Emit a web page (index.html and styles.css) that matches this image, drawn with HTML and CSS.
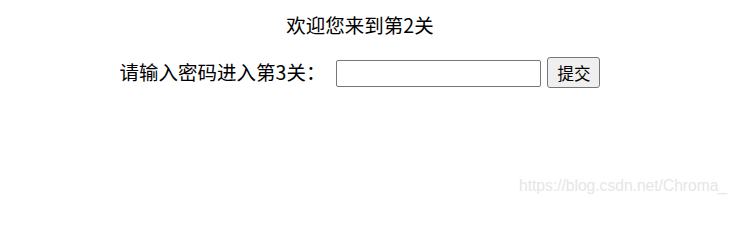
FILE: index.html
```html
<!DOCTYPE html>
<html lang="zh-CN">
<head>
<meta charset="utf-8">
<title>第2关</title>
<link rel="stylesheet" href="styles.css">
</head>
<body>
<div class="page">
  <div class="title">欢迎您来到第2关</div>
  <form class="row" onsubmit="return false;">
    <label class="label" for="pw">请输入密码进入第3关：</label>
    <input class="field" id="pw" type="text">
    <button class="btn" type="submit">提交</button>
  </form>
</div>
<div class="watermark">https://blog.csdn.net/Chroma_</div>
</body>
</html>
```
FILE: styles.css
```css
html, body {
  margin: 0;
  padding: 0;
  background: #ffffff;
}
body {
  font-family: "Noto Sans CJK SC", "Noto Sans", sans-serif;
  color: #000;
  width: 738px;
  height: 204px;
  position: relative;
  overflow: hidden;
}
.page {
  width: 720px;
  padding-top: 13px;
  text-align: center;
}
.title {
  font-size: 19.5px;
  line-height: 24px;
  height: 24px;
}
.row {
  margin: 20px 0 0 0;
  display: flex;
  justify-content: center;
  align-items: center;
  height: 31px;
}
.label {
  font-size: 19.5px;
  line-height: 24px;
  margin-right: 11px;
  margin-top: -2px;
}
.field {
  box-sizing: border-box;
  width: 205px;
  height: 27px;
  margin: 2px 6px 0 0;
  border: 1px solid #767676;
  border-radius: 2px;
  padding: 1px 2px;
  font-size: 14px;
  background: #fff;
}
.btn {
  box-sizing: border-box;
  width: 53px;
  height: 31px;
  margin: 0;
  border: 1px solid #767676;
  border-radius: 3px;
  background: #efefef;
  font-family: "Noto Sans CJK SC", sans-serif;
  font-size: 16.5px;
  line-height: 20px;
  padding: 0;
  color: #000;
}
.watermark {
  position: absolute;
  left: 519px;
  top: 176px;
  font-family: "Liberation Sans", Arial, sans-serif;
  font-size: 15.6px;
  line-height: 20px;
  color: #e6e6e6;
  white-space: nowrap;
}
```
